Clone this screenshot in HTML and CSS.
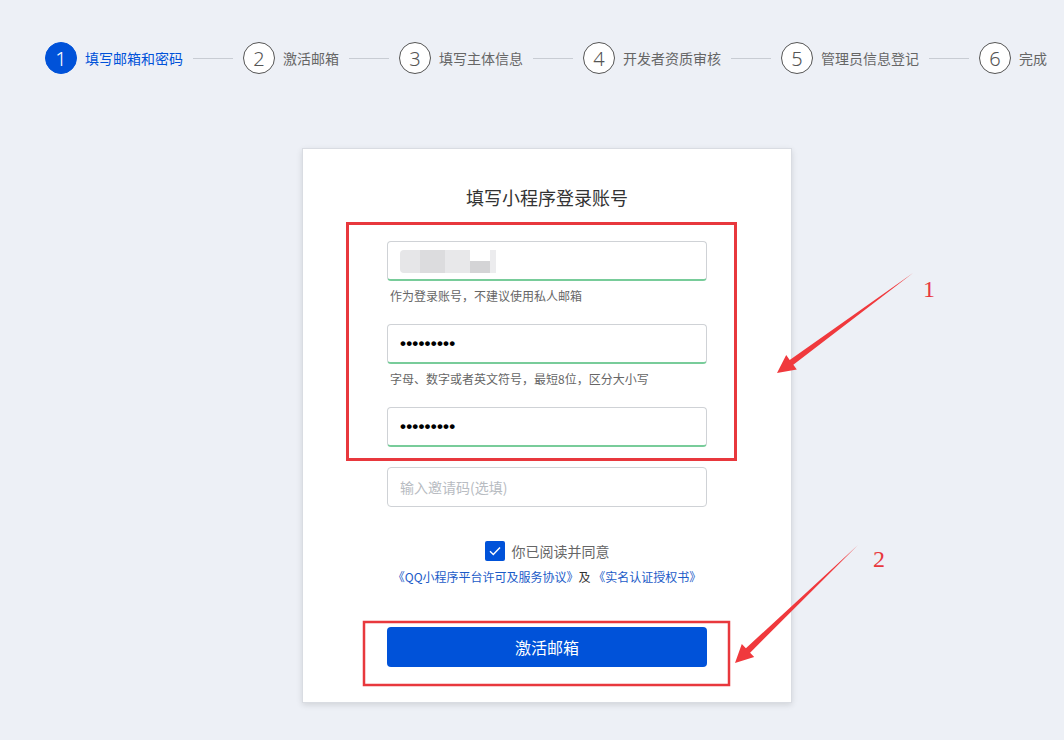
FILE: index.html
```html
<!DOCTYPE html>
<html lang="zh-CN">
<head>
  <meta charset="UTF-8">
  <meta name="viewport" content="width=device-width, initial-scale=1.0">
  <title>QQ小程序注册</title>
  <link rel="stylesheet" href="styles.css">
</head>
<body>
  <!-- steps -->
  <div class="steps">
    <div class="step active"><span class="num">1</span><span class="label">填写邮箱和密码</span></div>
    <span class="line"></span>
    <div class="step"><span class="num">2</span><span class="label">激活邮箱</span></div>
    <span class="line"></span>
    <div class="step"><span class="num">3</span><span class="label">填写主体信息</span></div>
    <span class="line"></span>
    <div class="step"><span class="num">4</span><span class="label">开发者资质审核</span></div>
    <span class="line"></span>
    <div class="step"><span class="num">5</span><span class="label">管理员信息登记</span></div>
    <span class="line"></span>
    <div class="step"><span class="num">6</span><span class="label">完成</span></div>
  </div>

  <div class="card">
    <h2 class="title">填写小程序登录账号</h2>
    <form class="form">
      <div class="field ok">
        <div class="blur">
          <span class="b1"></span><span class="b2"></span><span class="b3"></span><span class="b4"></span><span class="b5"></span>
        </div>
      </div>
      <p class="tip">作为登录账号，不建议使用私人邮箱</p>

      <input class="field ok gap pwd" type="password" value="123456789">
      <p class="tip">字母、数字或者英文符号，最短8位，区分大小写</p>

      <input class="field ok gap pwd" type="password" value="123456789">

      <input class="field invite" type="text" placeholder="输入邀请码(选填)">

      <div class="agree">
        <span class="check">
          <svg width="12" height="10" viewBox="0 0 12 10"><path d="M1 5.2 L4.3 8.4 L11 1.4" fill="none" stroke="#fff" stroke-width="1.4"/></svg>
        </span>
        <span>你已阅读并同意</span>
      </div>
      <div class="links">
        <a href="#">《QQ小程序平台许可及服务协议》</a>及 <a href="#">《实名认证授权书》</a>
      </div>

      <button type="button" class="submit">激活邮箱</button>
    </form>
  </div>

  <!-- annotations drawn on top of the screenshot -->
  <svg class="marks" width="1064" height="740" viewBox="0 0 1064 740">
    <rect x="347.5" y="223.5" width="388" height="236" fill="none" stroke="#e8383d" stroke-width="3"/>
    <rect x="364" y="622" width="365" height="63" fill="none" stroke="#e8383d" stroke-width="2.5"/>
    <polygon points="913,273 793.3,364.7 796.8,369.5 777,373 786.2,355.1 789.7,359.9" fill="#f0393d"/>
    <polygon points="858,545 750.1,652.7 754.2,657 735,663 741.8,644 745.9,648.3" fill="#f0393d"/>
    <text x="923" y="297" class="mark-num">1</text>
    <text x="873" y="567" class="mark-num">2</text>
  </svg>
</body>
</html>
```

FILE: styles.css
```css
body {
  margin: 0;
  background-color: #edf0f6;
  font-family: "Noto Sans CJK SC", "Noto Sans", sans-serif;
  color: #333;
  position: relative;
  height: 740px;
  overflow: hidden;
}
.steps {
  display: flex;
  align-items: center;
  padding: 42px 0 0 45px;
  height: 32px;
}
.step {
  display: flex;
  align-items: center;
  gap: 8px;
  color: #666;
  font-size: 14px;
}
.step .num {
  width: 30px;
  height: 30px;
  border: 1px solid #555;
  border-radius: 50%;
  display: flex;
  align-items: center;
  justify-content: center;
  font-family: "Noto Sans", sans-serif;
  font-size: 20px;
  font-weight: 300;
  color: #555;
  background: #fff;
}
.step.active {
  color: #0052d9;
}
.step.active .num {
  background: #0052d9;
  border-color: #0052d9;
  color: #fff;
}
.line {
  width: 40px;
  height: 1px;
  background: #c8ccd3;
  margin: 0 10px;
}
.card {
  width: 488px;
  margin: 74px 0 0 302px;
  background: #fff;
  border: 1px solid #d9dce2;
  box-shadow: 0 2px 6px rgba(0, 0, 0, 0.12);
  padding: 36px 0 35px;
}
.title {
  margin: 0;
  text-align: center;
  font-size: 18px;
  font-weight: normal;
  line-height: 24px;
  color: #333;
}
.form {
  width: 320px;
  margin: 32px auto 0;
  display: flex;
  flex-direction: column;
}
.field {
  box-sizing: border-box;
  width: 320px;
  height: 40px;
  border: 1px solid #cfd2d6;
  border-radius: 4px;
  padding: 0 12px;
  font-family: inherit;
  font-size: 14px;
  color: #000;
  outline: none;
  margin: 0;
  display: flex;
  align-items: center;
}
.field.ok {
  border-bottom: 2px solid #78cc9a;
}
.field.gap {
  margin-top: 19px;
}
.field.pwd {
  font-family: "Liberation Sans", Arial, sans-serif;
  font-size: 17px;
  font-weight: bold;
  letter-spacing: 0.2px;
}
.field.invite {
  margin-top: 20px;
}
.field::placeholder {
  color: #b8bcc2;
}
.blur {
  display: flex;
  align-items: flex-end;
  height: 24px;
  margin-top: 1px;
}
.blur span {
  display: block;
  height: 23px;
}
.b1 { width: 20px; background: #e6e6e8; border-radius: 4px 0 0 4px; }
.b2 { width: 25px; background: #dcdcde; }
.b3 { width: 25px; background: #e8e8ea; }
.b4 { width: 20px; background: #d4d4d6; height: 12px !important; }
.b5 { width: 6px; background: #ececee; }
.tip {
  margin: 6px 0 0;
  padding-left: 3px;
  font-size: 12px;
  line-height: 18px;
  color: #666;
}
.agree {
  margin-top: 34px;
  display: flex;
  align-items: center;
  justify-content: center;
  gap: 7px;
  font-size: 14px;
  color: #666;
}
.check {
  width: 20px;
  height: 20px;
  background: #0052d9;
  border-radius: 2px;
  display: flex;
  align-items: center;
  justify-content: center;
}
.links {
  margin-top: 7px;
  text-align: center;
  font-size: 12px;
  line-height: 18px;
  color: #333;
}
.links a {
  color: #1b5bc8;
  text-decoration: none;
}
.submit {
  margin-top: 41px;
  height: 40px;
  border: none;
  border-radius: 4px;
  background-color: #0052d9;
  color: #fff;
  font-family: inherit;
  font-size: 16px;
  cursor: pointer;
}
.marks {
  position: absolute;
  left: 0;
  top: 0;
  pointer-events: none;
}
.mark-num {
  font-family: "Liberation Serif", serif;
  font-size: 24px;
  fill: #e8383d;
}
```
